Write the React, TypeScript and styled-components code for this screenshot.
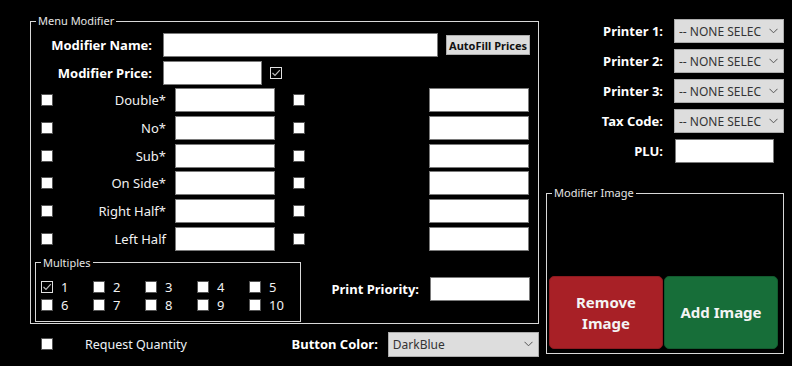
import styled, { createGlobalStyle } from "styled-components";

const GlobalStyle = createGlobalStyle`
  html, body {
    margin: 0;
    background: #000;
    font-family: "Segoe UI", "Noto Sans", "Open Sans", sans-serif;
    color: #fff;
  }
`;

const modifiers = ["Double*", "No*", "Sub*", "On Side*", "Right Half*", "Left Half"];
const printers = ["Printer 1:", "Printer 2:", "Printer 3:", "Tax Code:"];
const multiples = [1, 2, 3, 4, 5, 6, 7, 8, 9, 10];

const Check: React.FC<{ checked?: boolean }> = ({ checked }) => (
  <Box $checked={checked}>
    {checked && (
      <svg width="10" height="10" viewBox="0 0 10 10">
        <path d="M1.5 5 L4 7.5 L8.8 2.2" fill="none" stroke="#bdbdbd" strokeWidth="1.2" />
      </svg>
    )}
  </Box>
);

const Combo: React.FC<{ value: string; width: number; height?: number }> = ({ value, width, height }) => (
  <ComboBox style={{ width, height }}>
    <ComboText>{value}</ComboText>
    <svg width="9" height="6" viewBox="0 0 9 6">
      <path d="M0.5 0.8 L4.5 4.8 L8.5 0.8" fill="none" stroke="#555" strokeWidth="1" />
    </svg>
  </ComboBox>
);

export default function App() {
  return (
    <>
      <GlobalStyle />
      <Page>
        <LeftCol>
          <MainSet>
            <Legend>Menu Modifier</Legend>
            <Row>
              <BoldLabel>Modifier Name:</BoldLabel>
              <TextBox $w={275} />
              <AutoFill>AutoFill Prices</AutoFill>
            </Row>
            <Row $top={4}>
              <BoldLabel>Modifier Price:</BoldLabel>
              <TextBox $w={99} />
              <Check checked />
            </Row>
            <ModGrid>
              {modifiers.map((m) => (
                <ModRow key={m}>
                  <Check />
                  <ModLabel>{m}</ModLabel>
                  <TextBox $w={100} />
                  <Check />
                  <TextBox $w={100} />
                </ModRow>
              ))}
            </ModGrid>
            <BottomArea>
              <MultiSet>
                <SmallLegend>Multiples</SmallLegend>
                <MultiGrid>
                  {multiples.map((n) => (
                    <MultiItem key={n}>
                      <Check checked={n === 1} />
                      <span>{n}</span>
                    </MultiItem>
                  ))}
                </MultiGrid>
              </MultiSet>
              <PriorityRow>
                <BoldLabel as="span">Print Priority:</BoldLabel>
                <TextBox $w={100} />
              </PriorityRow>
            </BottomArea>
          </MainSet>
          <FooterRow>
            <ReqQty>
              <Check />
              <ReqLabel>Request Quantity</ReqLabel>
            </ReqQty>
            <BoldLabel as="span">Button Color:</BoldLabel>
            <Combo value="DarkBlue" width={152} height={25} />
          </FooterRow>
        </LeftCol>
        <RightCol>
          <PrinterGrid>
            {printers.map((p) => (
              <Pair key={p}>
                <PrinterLabel>{p}</PrinterLabel>
                <Combo value="-- NONE SELEC" width={110} />
              </Pair>
            ))}
            <PrinterLabel>PLU:</PrinterLabel>
            <TextBox $w={99} style={{ marginLeft: 1 }} />
          </PrinterGrid>
          <ImageSet>
            <SmallLegend>Modifier Image</SmallLegend>
            <ImageButtons>
              <ImageButton $bg="#a82026" $edge="#8c1a1f">Remove<br />Image</ImageButton>
              <ImageButton $bg="#176e39" $edge="#125a2e">Add Image</ImageButton>
            </ImageButtons>
          </ImageSet>
        </RightCol>
      </Page>
    </>
  );
}

const Pair = styled.div`
  display: contents;
`;

const Page = styled.div`
  display: flex;
  gap: 7px;
  padding: 14px 0 0 30px;
`;

const LeftCol = styled.div`
  display: flex;
  flex-direction: column;
  width: 509px;
`;

const MainSet = styled.fieldset`
  margin: 0;
  width: 509px;
  box-sizing: border-box;
  border: 1px solid #d8d8d8;
  padding: 5px 8px 1px 10px;
  min-inline-size: 0;
`;

const Legend = styled.legend`
  font-size: 11px;
  line-height: 14px;
  padding: 0 2px;
  margin-left: -5px;
  color: #e6e6e6;
`;

const SmallLegend = styled.legend`
  font-size: 11px;
  line-height: 14px;
  padding: 0 2px;
  color: #e6e6e6;
`;

const Row = styled.div<{ $top?: number }>`
  display: flex;
  align-items: center;
  height: 24px;
  margin-top: ${(p) => p.$top ?? 0}px;
  gap: 11px;
  & > *:nth-child(3) {
    margin-left: -3px;
  }
`;

const BoldLabel = styled.label`
  width: 111px;
  text-align: right;
  font-weight: 700;
  font-size: 13px;
  white-space: nowrap;
  color: #fff;
`;

const TextBox = styled.input.attrs({ type: "text" })<{ $w: number }>`
  width: ${(p) => p.$w}px;
  height: 24px;
  box-sizing: border-box;
  border: 1px solid #7a7a7a;
  background: #fff;
  margin: 0;
  padding: 0 3px;
`;

const AutoFill = styled.button`
  width: 84px;
  height: 20px;
  box-sizing: border-box;
  padding: 0;
  background: #dddddd;
  border: 1px solid #adadad;
  border-radius: 0;
  font-family: inherit;
  font-size: 11px;
  font-weight: 700;
  color: #111;
`;

const Box = styled.span<{ $checked?: boolean }>`
  display: inline-flex;
  align-items: center;
  justify-content: center;
  width: 12px;
  height: 12px;
  box-sizing: border-box;
  flex-shrink: 0;
  background: ${(p) => (p.$checked ? "#000" : "#fff")};
  border: 1px solid ${(p) => (p.$checked ? "#e0e0e0" : "#555")};
`;

const ModGrid = styled.div`
  display: grid;
  grid-auto-rows: 24px;
  row-gap: 3.8px;
  margin-top: 3px;
`;

const ModRow = styled.div`
  display: grid;
  grid-template-columns: 12px 122px 118px 136px 100px;
  align-items: center;
`;

const ModLabel = styled.span`
  text-align: right;
  padding-right: 9px;
  font-size: 13px;
  color: #f2f2f2;
`;

const BottomArea = styled.div`
  display: flex;
  align-items: center;
  margin-top: 5px;
`;

const MultiSet = styled.fieldset`
  margin: 0 0 0 -6px;
  width: 266px;
  box-sizing: border-box;
  border: 1px solid #d8d8d8;
  padding: 8px 4px 7px 5px;
  min-inline-size: 0;
`;

const MultiGrid = styled.div`
  display: grid;
  grid-template-columns: repeat(5, 52px);
  grid-auto-rows: 18px;
`;

const MultiItem = styled.div`
  display: flex;
  align-items: center;
  gap: 8px;
  font-size: 13px;
  color: #f2f2f2;
`;

const PriorityRow = styled.div`
  display: flex;
  align-items: center;
  gap: 11px;
  margin-left: auto;
`;

const FooterRow = styled.div`
  display: flex;
  align-items: center;
  height: 25px;
  margin-top: 8px;
  padding-left: 11px;
  & > span:nth-child(2) {
    width: auto;
    margin-right: 10px;
  }
`;

const ReqQty = styled.div`
  display: flex;
  align-items: center;
  gap: 32px;
  width: 252px;
`;

const ReqLabel = styled.span`
  font-size: 12.5px;
  color: #eef2f6;
`;

const ComboBox = styled.div`
  display: flex;
  align-items: center;
  gap: 3px;
  height: 24px;
  box-sizing: border-box;
  background: #dddddd;
  border: 1px solid #acacac;
  padding: 0 5px 0 4px;
`;

const ComboText = styled.span`
  flex: 1;
  overflow: hidden;
  white-space: nowrap;
  font-size: 12px;
  color: #333;
`;

const RightCol = styled.div`
  display: flex;
  flex-direction: column;
  width: 238px;
  padding-top: 5px;
`;

const PrinterGrid = styled.div`
  display: grid;
  grid-template-columns: 117px 110px;
  grid-auto-rows: 24px;
  column-gap: 11px;
  row-gap: 6px;
  align-items: center;
`;

const PrinterLabel = styled.span`
  text-align: right;
  font-weight: 700;
  font-size: 13px;
`;

const ImageSet = styled.fieldset`
  margin: 23px 0 0 0;
  width: 238px;
  height: 168px;
  box-sizing: border-box;
  border: 1px solid #d8d8d8;
  padding: 0 5px 4px 2px;
  min-inline-size: 0;
  & > legend {
    margin-left: 3px;
  }
`;

const ImageButtons = styled.div`
  display: flex;
  gap: 1px;
  height: 73px;
  margin-top: 76px;
`;

const ImageButton = styled.button<{ $bg: string; $edge: string }>`
  flex: 1;
  background: ${(p) => p.$bg};
  border: 1px solid ${(p) => p.$edge};
  border-radius: 5px;
  color: #f4f4f4;
  font-family: inherit;
  font-size: 15px;
  font-weight: 700;
  line-height: 21px;
  padding: 0;
`;
